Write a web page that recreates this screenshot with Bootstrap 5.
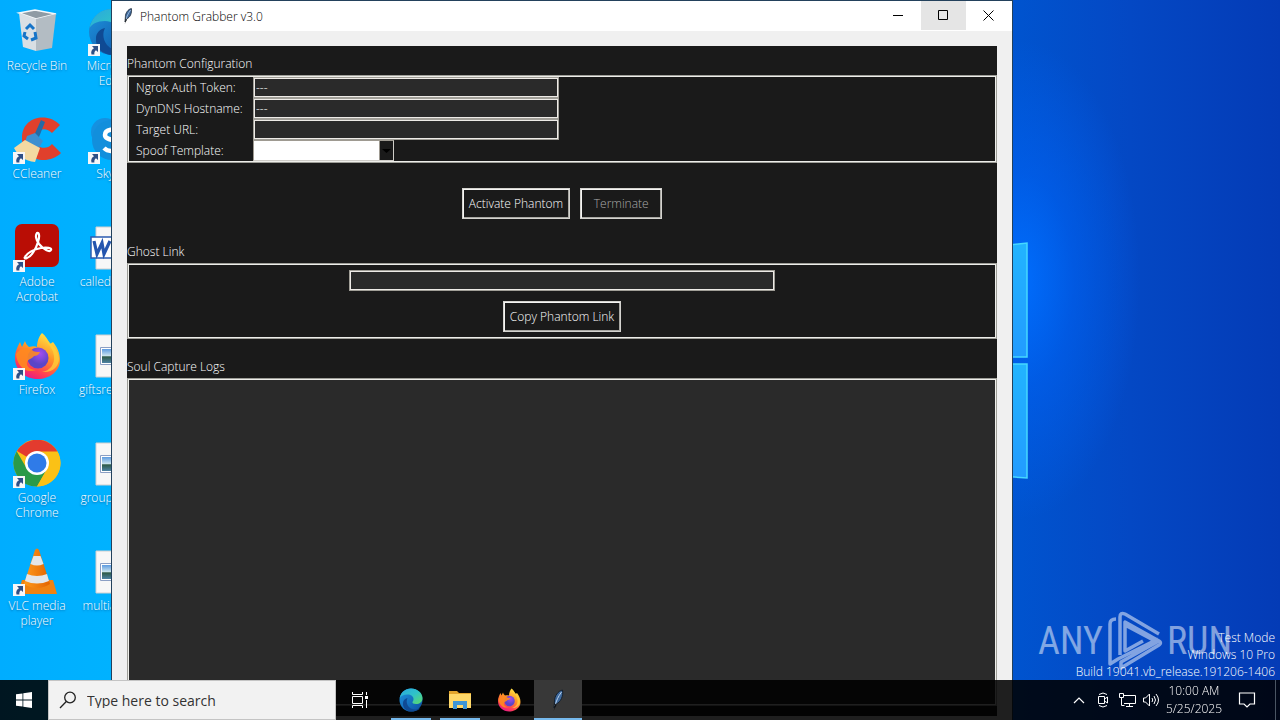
<!DOCTYPE html>
<html lang="en">
<head>
<meta charset="utf-8">
<meta name="viewport" content="width=device-width, initial-scale=1">
<title>Desktop</title>
<link href="https://cdn.jsdelivr.net/npm/bootstrap@5.3.0/dist/css/bootstrap.min.css" rel="stylesheet">
<style>
  body {
    font-family: "Open Sans", "Noto Sans", sans-serif;
    font-size: 12px;
    font-weight: 350;
    line-height: 15px;
    color: #fff;
    background:
      radial-gradient(ellipse 120px 240px at 1020px 280px, rgba(0,110,255,.95), rgba(0,100,250,.5) 45%, rgba(0,90,230,0) 100%),
      linear-gradient(90deg, #00adff 0, #00b2ff 112px, #0a62da 900px, #0054cf 1012px, #0448c4 1130px, #043bb6 1280px);
  }
  button, input, select, textarea { font-weight: inherit; }
  svg { display: block; }
  .icon-grid {
    display: grid;
    grid-template-rows: repeat(6, 108px);
    grid-auto-flow: column;
    grid-auto-columns: 74px;
    column-gap: 1px;
    padding-top: 8px;
    width: max-content;
  }
  .icon-tile { color: #fff; text-decoration: none; text-align: center; text-shadow: 0 1px 2px rgba(0,40,90,.5); }
  .icon-tile svg { margin: 0 auto 2px; }

  .app-window { top: 0; left: 111px; right: 267px; bottom: -12px; border: 1px solid #23415c; background: #f0f0f0; }
  .title-bar { height: 30px; padding-right: 1px; background: #fff; color: #000; }
  .title-bar .caption-btn { width: 45px; height: 29px; border: 0; background: none; padding: 0; }
  .title-bar .caption-btn.hovered { background: #e5e5e5; }
  .panel { margin: 15px; padding: 9px 0 10px; background: #1a1a1a; min-height: 0; }
  .panel h2 { font-size: 12px; line-height: 18px; font-weight: inherit; margin: 0 0 2px; }
  .frame { border: 1px solid #9e9e98; box-shadow: inset 0 0 0 1px #eeeeea; padding: 1px; }
  .frame-log { background: #2a2a2a; }
  .frame-log textarea { background: #2a2a2a; color: #fff; border: 0; resize: none; display: block; }
  .field-row { height: 21px; }
  .field-row label { width: 124px; padding-left: 7px; }
  .field {
    height: 21px; width: 306px; padding: 0 2px; color: #fff; background: #2a2a2a; border-radius: 0;
    border: 1px solid #a09e97; box-shadow: inset 0 0 0 1px #eeebe7;
  }
  .field-wide { width: 426px; }
  .field-pick {
    width: 141px; appearance: none; box-shadow: none; border-color: #9e9a91 #cfcdc8 #cfcdc8 #9e9a91;
    background: #fff url("data:image/svg+xml,%3Csvg xmlns='http://www.w3.org/2000/svg' width='14' height='19'%3E%3Crect width='1' height='19' fill='%239e9a91'/%3E%3Crect x='1' width='13' height='19' fill='%231a1a1a'/%3E%3Cpath d='M3 8h9L7.500 12z' fill='%23000'/%3E%3C/svg%3E") no-repeat right center;
  }
  .tool-btn {
    height: 31px; min-width: 82px; padding: 0 6px; color: #fff; background: #1a1a1a;
    border: 1px solid #d4d3cf; box-shadow: inset 1px 1px #f4f4f2, inset -1px -1px #a9a8a3;
  }
  .tool-btn:disabled { color: #aaa; }
  .button-row { margin: 25px 0 24px; gap: 10px; }
  .ghost-frame { padding: 6px; gap: 10px; margin-bottom: 19px; }

  .branding { right: 48px; bottom: 49px; gap: 3px; color: rgba(255,255,255,.5); font: 38px/60px "Roboto Condensed", "Liberation Sans", sans-serif; }
  .build-note { right: 5px; bottom: 40px; line-height: 17px; text-align: right; }

  .taskbar { height: 40px; background: rgba(0,0,0,.87); }
  .taskbar button { border: 0; background: none; color: #fff; padding: 0; }
  .task-btn { width: 48px; height: 40px; }
  .task-apps { margin-left: 3px; gap: 1px; }
  .taskbar .running { background: linear-gradient(#76b9ed, #76b9ed) center bottom / 40px 2px no-repeat; }
  .taskbar .focused { background: linear-gradient(#76b9ed, #76b9ed) center bottom / 48px 2px no-repeat, #383838; }
  .search-box { width: 288px; background: #f2f2f2; border: 1px solid #c4c4c4; color: #222; padding-left: 10px; gap: 10px; }
  .search-box input { border: 0; background: none; outline: 0; font-size: 14px; font-weight: 400; min-width: 0; padding: 0; color: #222; }
  .search-box input::placeholder { color: #333; opacity: 1; }
  .tray-btn { width: 24px; height: 40px; }
  .taskbar .clock { width: 62px; line-height: 18px; }
  .notice-btn { width: 44px; }
  .taskbar .peek { width: 5px; height: 40px; margin-left: 6px; border-left: 1px solid #4a5563; }
</style>
</head>
<body class="vh-100 overflow-hidden position-relative">

<svg width="0" height="0" class="position-absolute" aria-hidden="true">
  <defs>
    <linearGradient id="edgeA" x1="0" y1="0" x2="1" y2="1"><stop offset="0" stop-color="#2aa7e0"/><stop offset=".5" stop-color="#2fc2c8"/><stop offset="1" stop-color="#5fdc65"/></linearGradient>
    <linearGradient id="edgeB" x1="0" y1="0" x2="1" y2="1"><stop offset="0" stop-color="#1f95e0"/><stop offset="1" stop-color="#0c4fa0"/></linearGradient>
    <linearGradient id="foxA" x1=".8" y1="0" x2=".3" y2="1"><stop offset="0" stop-color="#fff04a"/><stop offset=".45" stop-color="#ff9326"/><stop offset=".8" stop-color="#ff3c55"/><stop offset="1" stop-color="#e5188a"/></linearGradient>
    <radialGradient id="foxB" cx=".6" cy=".3"><stop offset="0" stop-color="#a34df0"/><stop offset="1" stop-color="#5b45c8"/></radialGradient>
    <linearGradient id="pane" x1="0" y1="0" x2="0" y2="1"><stop offset="0" stop-color="#22b4ff"/><stop offset="1" stop-color="#229bff"/></linearGradient>
    <linearGradient id="cone" x1="0" y1="0" x2="1" y2="0"><stop offset="0" stop-color="#ff9a1c"/><stop offset="1" stop-color="#e36400"/></linearGradient>
    <linearGradient id="sky" x1="0" y1="0" x2="0" y2="1"><stop offset="0" stop-color="#5d9be0"/><stop offset=".5" stop-color="#cfe6ee"/><stop offset=".55" stop-color="#2e5a46"/><stop offset="1" stop-color="#4d83a5"/></linearGradient>
    <symbol id="shortcut" viewBox="0 0 12 12"><path d="M0 0h12v12H0z" fill="#f6f6f8"/><path d="M4 2h6v6L8 6.200C6.500 7.200 6.200 8.500 6.400 10.500H3.500C2.600 7.500 3.800 5.500 6 4.200z" fill="#2e4f86"/></symbol>
    <symbol id="edge" viewBox="0 0 48 48">
      <circle cx="24" cy="24" r="23" fill="url(#edgeB)"/>
      <path d="M1.500 20C4 8 13 1 24 1c13 0 23 9 23 19 0 8-6 12-13 12-5 0-8-2-7-4 1-2 2-3 2-6 0-5-5-9-12-9-8 0-13 3-15.500 7z" fill="url(#edgeA)"/>
      <path d="M17 20c-5 10 2 23 16 23 5 0 9-2 11-4-4 5-11 8-19 8-11 0-18-8-17-17 0-5 4-9 9-10z" fill="#0f4a94"/>
    </symbol>
    <symbol id="firefox" viewBox="0 0 48 48">
      <path d="M29 1c4 3 6 7 8 11l3-2c4 5 7 11 7 18 0 11-10 19-22.500 19S2 38 2 26C2 19 5 14 7 10l2 5 3-6c1 3 2 4 4 6 3-1 6-1 8 0 0-5 2-11 5-14z" fill="url(#foxA)"/>
      <circle cx="25" cy="26" r="10.500" fill="url(#foxB)"/>
      <path d="M3 22c5-7 12-7 16-4 2 2 5 2 8 2-1 3-4 4-6 4-2 3-6 3-7 6-1 4 3 8 9 8-9 4-19-3-20-16z" fill="#ff8a1f" opacity=".9"/>
      <path d="M30 2c0 8 10 11 11 22 1 8-4 15-12 16 11 1 17-6 17-13 0-10-9-14-16-25z" fill="#ffd23a" opacity=".75"/>
    </symbol>
    <symbol id="picture" viewBox="0 0 48 48"><path d="M8 3h32v42H8z" fill="#f7f7f7" stroke="#cfcfcf"/><path d="M12.500 15.500h23v17h-23z" fill="#fff" stroke="#8b9fc4"/><path d="M14 17h20v14H14z" fill="url(#sky)"/></symbol>
    <symbol id="feather" viewBox="0 0 16 24"><path d="M12.500 2C8 3 4.500 8 4.500 13l-.5 7 2-4c5-2 7.500-8 6.500-14z" fill="#3f699c" stroke="#14202e" stroke-width="1"/><path d="M11.500 4C8 9 6.500 12 5 18" fill="none" stroke="#b9d3ee"/><path d="M4.500 15v5l-1 3 3-6z" fill="#111"/></symbol>
  </defs>
</svg>

<main class="icon-grid" aria-label="Desktop icons">
  <a class="icon-tile" href="#"><svg width="48" height="48" viewBox="0 0 48 48"><path d="M6 5 22 2l21 4-20 5z" fill="#8f9ba4" stroke="#f5f8fa" stroke-width="1.500"/><path d="M23 11 43 6l-4 34-16 3z" fill="#b3bcc3"/><path d="M6 5 23 11v32L10 39z" fill="#d9dfe4"/><path d="M13 21l4-4 4 4M22 24l1 6-5 2M15 31l-4-3 1-4" fill="none" stroke="#1674c8" stroke-width="3"/></svg>Recycle Bin</a>
  <a class="icon-tile" href="#"><svg width="48" height="48" viewBox="0 0 48 48"><path d="M47 9C35-4 9 0 9 22c0 23 26 28 39 15l-9-9c-6 7-17 4-17-6 0-9 11-12 17-5z" fill="#e0402c"/><path d="M28 4l4 2-8 20-5-2z" fill="#246aa5"/><path d="M14 20l8-3 8 8-4 7-14-6z" fill="#3d8fd0"/><path d="M12 24l15 8-5 14C12 45 5 40 1 32z" fill="#f3d9a2"/><use href="#shortcut" y="36" width="12" height="12"/></svg>CCleaner</a>
  <a class="icon-tile" href="#"><svg width="48" height="48" viewBox="0 0 48 48"><rect x="2" y="0" width="44" height="43" rx="7" fill="#b90d05"/><path d="M12 33c2-4 9-8 16-9 6-1 11 0 10 2-1 3-8-1-12-6-3-4-4-9-2-11 2-1 3 3 1 9-2 7-7 15-11 16-2 1-3 0-2-1z" fill="none" stroke="#fff" stroke-width="2.200"/><use href="#shortcut" y="36" width="12" height="12"/></svg>Adobe<br>Acrobat</a>
  <a class="icon-tile" href="#"><svg width="48" height="48" viewBox="0 0 48 48"><use href="#firefox" width="48" height="48"/><use href="#shortcut" y="36" width="12" height="12"/></svg>Firefox</a>
  <a class="icon-tile" href="#"><svg width="48" height="48" viewBox="0 0 48 48"><circle cx="24" cy="23" r="23.500" fill="#fbc116"/><path d="M24 23 4 11A23.500 23.500 0 0 1 44.500 11.500z" fill="#e33b2e"/><path d="M3.700 11.200A23.500 23.500 0 0 0 24 46.500L34 29 24 23l-10 6z" fill="#2a9a48"/><path d="M24 11.500h20.500A23.500 23.500 0 0 1 24 46.500L34 29z" fill="#fbc116"/><circle cx="24" cy="23" r="12" fill="#fff"/><circle cx="24" cy="23" r="9.500" fill="#2f7be8"/><use href="#shortcut" y="36" width="12" height="12"/></svg>Google<br>Chrome</a>
  <a class="icon-tile" href="#"><svg width="48" height="48" viewBox="0 0 48 48"><path d="M9 32h31l4 14H5z" fill="#f08211"/><path d="M22 2q2-3 4 0l11 34q-13 8-26 0z" fill="url(#cone)"/><path d="M20.500 8h7l3 8q-6.500 3-13 0zM14 26q10 4 20 0l2 7q-12 5-24 0z" fill="#e4e6e8"/><use href="#shortcut" y="36" width="12" height="12"/></svg>VLC media<br>player</a>
  <a class="icon-tile" href="#"><svg width="48" height="48" viewBox="0 0 48 48"><use href="#edge" width="48" height="48"/><use href="#shortcut" y="36" width="12" height="12"/></svg>Microsoft<br>Edge</a>
  <a class="icon-tile" href="#"><svg width="48" height="48" viewBox="0 0 48 48"><circle cx="17" cy="16" r="14" fill="#1591e0"/><circle cx="31" cy="31" r="14" fill="#0e7fd0"/><circle cx="24" cy="24" r="20" fill="#128fdc"/><path d="M31 16c-4-4-14-3-14 3s14 4 14 10-10 8-15 3" fill="none" stroke="#fff" stroke-width="4.500"/><use href="#shortcut" y="36" width="12" height="12"/></svg>Skype</a>
  <a class="icon-tile" href="#"><svg width="48" height="48" viewBox="0 0 48 48"><path d="M8 3h32v42H8z" fill="#f7f7f7" stroke="#cfcfcf"/><path d="M3 13h21v21H3z" fill="#fff" stroke="#2b5bb0" stroke-width="1.500"/><path d="M6 17l3 13 5-11 2 11 6-13" fill="none" stroke="#2455ae" stroke-width="3.200"/></svg>calledrad.rtf</a>
  <a class="icon-tile" href="#"><svg width="48" height="48"><use href="#picture" width="48" height="48"/></svg>giftsread.jpg</a>
  <a class="icon-tile" href="#"><svg width="48" height="48"><use href="#picture" width="48" height="48"/></svg>groupsa.jpg</a>
  <a class="icon-tile" href="#"><svg width="48" height="48"><use href="#picture" width="48" height="48"/></svg>multiaa.jpg</a>
</main>

<svg class="position-absolute" style="left:1000px;top:240px" width="30" height="240" viewBox="0 0 30 240" aria-hidden="true">
  <path d="M0 6 27 3v114H0z" fill="url(#pane)" stroke="#45d8ff" stroke-width="1.500"/>
  <path d="M0 124h27v114L0 236z" fill="url(#pane)" stroke="#45d8ff" stroke-width="1.500"/>
</svg>

<div class="branding position-absolute d-flex align-items-center" aria-label="ANY RUN">
  <span>ANY</span>
  <svg width="58" height="60" viewBox="0 0 58 60" fill="none" stroke="currentColor" stroke-width="3.500" stroke-linejoin="round"><path d="M10 8Q4 8 4 13v40l8-5 40-20M14 44V6q0-5 5-3l34 20M14 6v36M19 14l32 17-36 20v6l38-23q3-2 0-4L19 11v29l18-10"/></svg>
  <span>RUN</span>
</div>
<div class="build-note position-absolute">Test Mode<br>Windows 10 Pro<br>Build 19041.vb_release.191206-1406</div>

<section class="app-window position-absolute d-flex flex-column" aria-label="Phantom Grabber v3.0">
  <header class="title-bar d-flex align-items-center flex-shrink-0">
    <svg class="ms-2 me-1" width="16" height="18"><use href="#feather" width="16" height="18"/></svg>
    <span>Phantom Grabber v3.0</span>
    <div class="ms-auto d-flex align-self-start">
      <button class="caption-btn" aria-label="Minimize"><svg class="mx-auto" width="11" height="11"><path d="M0 5.500h10" stroke="#000"/></svg></button>
      <button class="caption-btn hovered" aria-label="Maximize"><svg class="mx-auto" width="11" height="11"><path d="M.5 .5h9v9h-9z" fill="none" stroke="#000"/></svg></button>
      <button class="caption-btn" aria-label="Close"><svg class="mx-auto" width="11" height="11"><path d="M.5 .5l10 10M10.500 .5l-10 10" stroke="#000"/></svg></button>
    </div>
  </header>
  <form class="panel flex-grow-1 d-flex flex-column" onsubmit="return false">
    <h2>Phantom Configuration</h2>
    <div class="frame">
      <div class="field-row d-flex align-items-center"><label for="token">Ngrok Auth Token:</label><input class="field" id="token" type="text" value="---"></div>
      <div class="field-row d-flex align-items-center"><label for="host">DynDNS Hostname:</label><input class="field" id="host" type="text" value="---"></div>
      <div class="field-row d-flex align-items-center"><label for="target">Target URL:</label><input class="field" id="target" type="text"></div>
      <div class="field-row d-flex align-items-center"><label for="template">Spoof Template:</label><select class="field field-pick" id="template"><option></option></select></div>
    </div>
    <div class="button-row d-flex justify-content-center">
      <button class="tool-btn">Activate Phantom</button>
      <button class="tool-btn" disabled>Terminate</button>
    </div>
    <h2>Ghost Link</h2>
    <div class="frame ghost-frame d-flex flex-column align-items-center">
      <input class="field field-wide" type="text" aria-label="Ghost Link">
      <button class="tool-btn">Copy Phantom Link</button>
    </div>
    <h2>Soul Capture Logs</h2>
    <div class="frame frame-log flex-grow-1 d-flex"><textarea class="flex-grow-1" aria-label="Soul Capture Logs"></textarea></div>
  </form>
</section>

<nav class="taskbar fixed-bottom d-flex" aria-label="Taskbar">
  <button class="task-btn" aria-label="Start"><svg class="mx-auto" width="16" height="16" fill="#fff"><path d="M0 2.300 6.500 1.400v6.200H0zM7.300 1.300 16 0v7.600H7.300zM0 8.400h6.500v6.200L0 13.700zM7.300 8.400H16V16l-8.700-1.300z"/></svg></button>
  <label class="search-box d-flex align-items-center"><svg width="18" height="18" fill="none" stroke="#222" stroke-width="1.300"><circle cx="11" cy="6.500" r="5.300"/><path d="M7.300 10.500 1 17"/></svg><input class="flex-grow-1" type="text" placeholder="Type here to search" aria-label="Search"></label>
  <button class="task-btn" aria-label="Task View"><svg class="mx-auto" width="18" height="18" fill="none" stroke="#fff"><path d="M1.500 1v2.500h10V1M1.500 17v-2.500h10V17M1.500 5.500h10v7h-10zM15.500 1v3M15.500 9v8"/><path d="M14 5h3v3h-3z" fill="#fff" stroke="none"/></svg></button>
  <div class="task-apps d-flex">
    <button class="task-btn running" aria-label="Microsoft Edge"><svg class="mx-auto" width="24" height="24"><use href="#edge" width="24" height="24"/></svg></button>
    <button class="task-btn running" aria-label="File Explorer"><svg class="mx-auto" width="22" height="20" viewBox="0 0 22 20"><path d="M0 1h8l2 2h12v4H0z" fill="#e3a52c"/><path d="M0 4h22v14H0z" fill="#ffd869"/><path d="M4 19v-8h14v8h-4v-4H8v4z" fill="#3d95d6"/></svg></button>
    <button class="task-btn" aria-label="Firefox"><svg class="mx-auto" width="24" height="24"><use href="#firefox" width="24" height="24"/></svg></button>
    <button class="task-btn focused" aria-label="Phantom Grabber"><svg class="mx-auto" width="16" height="24"><use href="#feather" width="16" height="24"/></svg></button>
  </div>
  <div class="ms-auto d-flex">
    <button class="tray-btn" aria-label="Show hidden icons"><svg class="mx-auto" width="12" height="8" fill="none" stroke="#fff" stroke-width="1.200"><path d="M1 7l5-5 5 5"/></svg></button>
    <button class="tray-btn" aria-label="Meet Now"><svg class="mx-auto" width="12" height="16" fill="none" stroke="#fff"><path d="M1.500 4.500h6v7h-6zM7.500 7l3-2v6l-3-2M2 2.500q4-3 8 0M2 13.500q4 3 8 0"/></svg></button>
    <button class="tray-btn" aria-label="Network"><svg class="mx-auto" width="18" height="14" fill="none" stroke="#fff"><path d="M5 2.500h12.500v8H6M11.500 11v2.500M8 13.500h7M1.500 .5h4v4h-4zM3.500 5v7.500h3"/></svg></button>
    <button class="tray-btn" aria-label="Volume"><svg class="mx-auto" width="18" height="14" fill="none" stroke="#fff"><path d="M1.500 5h2l4-4v12l-4-4h-2zM10 5q1.500 2 0 4M12 3q3 4 0 8M14 1q5 6 0 12"/></svg></button>
    <button class="clock">10:00 AM<br>5/25/2025</button>
    <button class="notice-btn" aria-label="Notifications"><svg class="mx-auto" width="18" height="18" fill="none" stroke="#fff" stroke-width="1.200"><path d="M1.500 2h15v11H12l-3 3-3-3H1.500z"/></svg></button>
    <button class="peek" aria-label="Show desktop"></button>
  </div>
</nav>
<script src="https://cdn.jsdelivr.net/npm/bootstrap@5.3.0/dist/js/bootstrap.bundle.min.js"></script>
</body>
</html>
